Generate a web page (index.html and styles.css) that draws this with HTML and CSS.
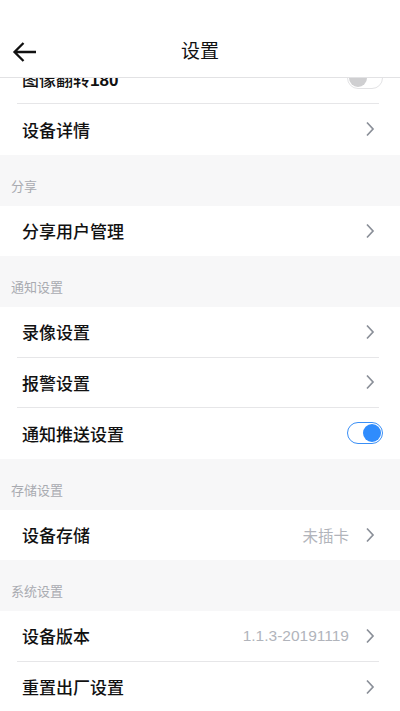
FILE: index.html
```html
<!DOCTYPE html>
<html lang="zh-CN">
<head>
<meta charset="utf-8">
<meta name="viewport" content="width=device-width, initial-scale=1">
<title>设置</title>
<link rel="stylesheet" href="styles.css">
</head>
<body>
<header class="topbar">
  <div class="status"></div>
  <div class="navbar">
    <button class="back" aria-label="返回">
      <svg width="26" height="22" viewBox="0 0 26 22"><path d="M2.5 11 H24 M11.5 2 L2.5 11 L11.5 20" fill="none" stroke="#111" stroke-width="2.3" stroke-linecap="butt" stroke-linejoin="miter"/></svg>
    </button>
    <h1 class="title">设置</h1>
  </div>
</header>
<main class="content">
  <section class="group">
    <div class="row"><div class="row-inner"><span class="label">图像翻转<span class="num">180</span></span><span class="switch"><span class="knob"></span></span></div></div>
    <div class="row"><div class="row-inner"><span class="label">设备详情</span><span class="chev"><svg width="10" height="16" viewBox="0 0 10 16"><path d="M2 1.5 L8 8 L2 14.5" fill="none" stroke="#8a8f98" stroke-width="1.7"/></svg></span></div></div>
  </section>
  <div class="section-title">分享</div>
  <section class="group">
    <div class="row"><div class="row-inner"><span class="label">分享用户管理</span><span class="chev"><svg width="10" height="16" viewBox="0 0 10 16"><path d="M2 1.5 L8 8 L2 14.5" fill="none" stroke="#8a8f98" stroke-width="1.7"/></svg></span></div></div>
  </section>
  <div class="section-title">通知设置</div>
  <section class="group">
    <div class="row"><div class="row-inner"><span class="label">录像设置</span><span class="chev"><svg width="10" height="16" viewBox="0 0 10 16"><path d="M2 1.5 L8 8 L2 14.5" fill="none" stroke="#8a8f98" stroke-width="1.7"/></svg></span></div></div>
    <div class="row"><div class="row-inner"><span class="label">报警设置</span><span class="chev"><svg width="10" height="16" viewBox="0 0 10 16"><path d="M2 1.5 L8 8 L2 14.5" fill="none" stroke="#8a8f98" stroke-width="1.7"/></svg></span></div></div>
    <div class="row"><div class="row-inner"><span class="label">通知推送设置</span><span class="switch on"><span class="knob"></span></span></div></div>
  </section>
  <div class="section-title">存储设置</div>
  <section class="group">
    <div class="row"><div class="row-inner"><span class="label">设备存储</span><span class="value">未插卡</span><span class="chev"><svg width="10" height="16" viewBox="0 0 10 16"><path d="M2 1.5 L8 8 L2 14.5" fill="none" stroke="#8a8f98" stroke-width="1.7"/></svg></span></div></div>
  </section>
  <div class="section-title">系统设置</div>
  <section class="group">
    <div class="row"><div class="row-inner"><span class="label">设备版本</span><span class="value">1.1.3-20191119</span><span class="chev"><svg width="10" height="16" viewBox="0 0 10 16"><path d="M2 1.5 L8 8 L2 14.5" fill="none" stroke="#8a8f98" stroke-width="1.7"/></svg></span></div></div>
    <div class="row"><div class="row-inner"><span class="label">重置出厂设置</span><span class="chev"><svg width="10" height="16" viewBox="0 0 10 16"><path d="M2 1.5 L8 8 L2 14.5" fill="none" stroke="#8a8f98" stroke-width="1.7"/></svg></span></div></div>
  </section>
</main>
</body>
</html>
```

FILE: styles.css
```css
* { box-sizing: border-box; }
html, body {
  margin: 0;
  padding: 0;
  background: #f7f7f8;
  font-family: "Liberation Sans", "Noto Sans CJK SC", sans-serif;
  color: #111;
  overflow: hidden;
  height: 711px;
}
.topbar {
  position: fixed;
  top: 0;
  left: 0;
  right: 0;
  z-index: 10;
  background: #fff;
  border-bottom: 1px solid #e2e2e4;
}
.status { height: 26px; }
.navbar {
  height: 51px;
  display: flex;
  align-items: center;
  justify-content: center;
  position: relative;
}
.back {
  position: absolute;
  left: 12px;
  top: 15px;
  border: 0;
  background: none;
  padding: 0;
  width: 26px;
  height: 22px;
}
.back svg { display: block; }
.title {
  margin: 0;
  font-size: 19px;
  font-weight: 400;
  line-height: 1;
  color: #111;
}
.content {
  padding-top: 53.5px;
}
.group {
  background: #fff;
}
.row {
  height: 50.5px;
  padding: 0 21px 0 17px;
}
.row-inner {
  height: 100%;
  display: flex;
  align-items: center;
  padding-left: 5px;
  border-bottom: 1px solid #e6e6e8;
}
.row:last-child .row-inner { border-bottom: 0; }
.label {
  flex: 1;
  font-size: 17px;
  font-weight: 500;
  color: #111;
  white-space: nowrap;
}
.num { font-weight: 700; }
.value {
  font-size: 15.5px;
  color: #b1b4bb;
  margin-right: 16px;
}
.chev {
  display: flex;
  align-items: center;
  margin-right: 4px;
}
.chev svg { display: block; }
.switch {
  position: relative;
  width: 36px;
  height: 22px;
  border-radius: 11px;
  border: 1px solid #e3e3e5;
  background: #fff;
  margin-right: -4px;
  flex: none;
}
.switch .knob {
  position: absolute;
  top: 1px;
  left: 1px;
  width: 18px;
  height: 18px;
  border-radius: 50%;
  background: #cfcfd1;
}
.switch.on {
  border-color: #3a8ff6;
}
.switch.on .knob {
  left: auto;
  right: 1px;
  background: #2f8cfd;
}
.section-title {
  height: 51px;
  display: flex;
  align-items: flex-end;
  padding: 0 0 12px 11px;
  font-size: 13px;
  line-height: 14px;
  color: #a9abb1;
}
```
